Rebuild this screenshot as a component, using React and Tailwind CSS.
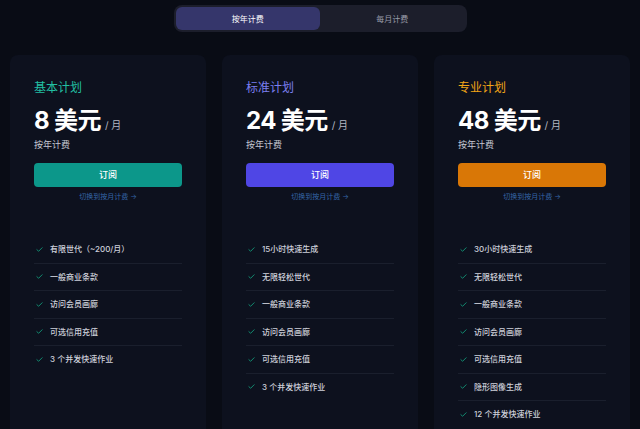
import React, { useState } from 'react';

const plans = [
    {
        name: '基本计划',
        price: '8',
        titleClass: 'text-[#22bfa2]',
        buttonClass: 'bg-[#0c978a]',
        features: ['有限世代（~200/月）', '一般商业条款', '访问会员画廊', '可选信用充值', '3 个并发快速作业'],
    },
    {
        name: '标准计划',
        price: '24',
        titleClass: 'text-[#7b7ff0]',
        buttonClass: 'bg-[#4f46e5]',
        features: ['15小时快速生成', '无限轻松世代', '一般商业条款', '访问会员画廊', '可选信用充值', '3 个并发快速作业'],
    },
    {
        name: '专业计划',
        price: '48',
        titleClass: 'text-[#f2a516]',
        buttonClass: 'bg-[#d97706]',
        features: ['30小时快速生成', '无限轻松世代', '一般商业条款', '访问会员画廊', '可选信用充值', '隐形图像生成', '12 个并发快速作业'],
    },
];

function Check() {
    return (
        <svg width="7" height="7" viewBox="0 0 24 24" fill="none" stroke="#149c7c" strokeWidth="3" strokeLinecap="round" strokeLinejoin="round" className="shrink-0">
            <path d="M3 12.5l6 5.5L21 6" />
        </svg>
    );
}

function PlanCard({ plan }) {
    return (
        <div className="bg-[#0d111e] rounded-lg px-6 pt-6 pb-6">
            <h3 className={`text-[12px] leading-[18px] ${plan.titleClass}`}>{plan.name}</h3>
            <div className="mt-2 flex items-baseline h-8 leading-8 overflow-hidden">
                <span className="text-[24px] font-bold text-white tracking-tight">{plan.price} 美元</span>
                <span className="ml-1 text-[10px] text-[#b4b8c4]">/ 月</span>
            </div>
            <p className="mt-px text-[9px] leading-[14px] text-[#c5c8d2]">按年计费</p>
            <button className={`mt-[11px] w-full h-6 rounded text-[9px] font-medium text-white ${plan.buttonClass}`}>
                订阅
            </button>
            <p className="mt-1 text-center text-[7px] leading-3 text-[#3566a8]">切换到按月计费 →</p>
            <ul className="mt-[33px]">
                {plan.features.map((f, i) => (
                    <li
                        key={f}
                        className={`flex items-center gap-[7px] pl-[2px] text-[8px] font-medium text-[#cdd0da] ${i > 0 ? 'border-t border-[#1a1f2d] h-[27.5px]' : 'h-[26.5px]'}`}
                    >
                        <Check />
                        <span>{f}</span>
                    </li>
                ))}
            </ul>
        </div>
    );
}

export default function App() {
    const [yearly, setYearly] = useState(true);

    return (
        <div
            className="min-h-screen bg-[#090c15] px-[10px] pt-[5px] pb-6"
            style={{ fontFamily: 'Inter, "Noto Sans CJK SC", sans-serif' }}
        >
            <div className="flex justify-center">
                <div className="flex w-[293px] h-[27px] p-[2px] rounded-lg bg-[#1c1e2b]">
                    <button
                        onClick={() => setYearly(true)}
                        className={`flex-1 rounded-md text-[8px] ${yearly ? 'bg-[#35366b] text-white' : 'text-[#9a9daa]'}`}
                    >
                        按年计费
                    </button>
                    <button
                        onClick={() => setYearly(false)}
                        className={`flex-1 rounded-md text-[8px] ${!yearly ? 'bg-[#35366b] text-white' : 'text-[#9a9daa]'}`}
                    >
                        每月计费
                    </button>
                </div>
            </div>

            <div className="mt-[23px] grid grid-cols-3 gap-4">
                {plans.map(p => (
                    <PlanCard key={p.name} plan={p} />
                ))}
            </div>
        </div>
    );
}
